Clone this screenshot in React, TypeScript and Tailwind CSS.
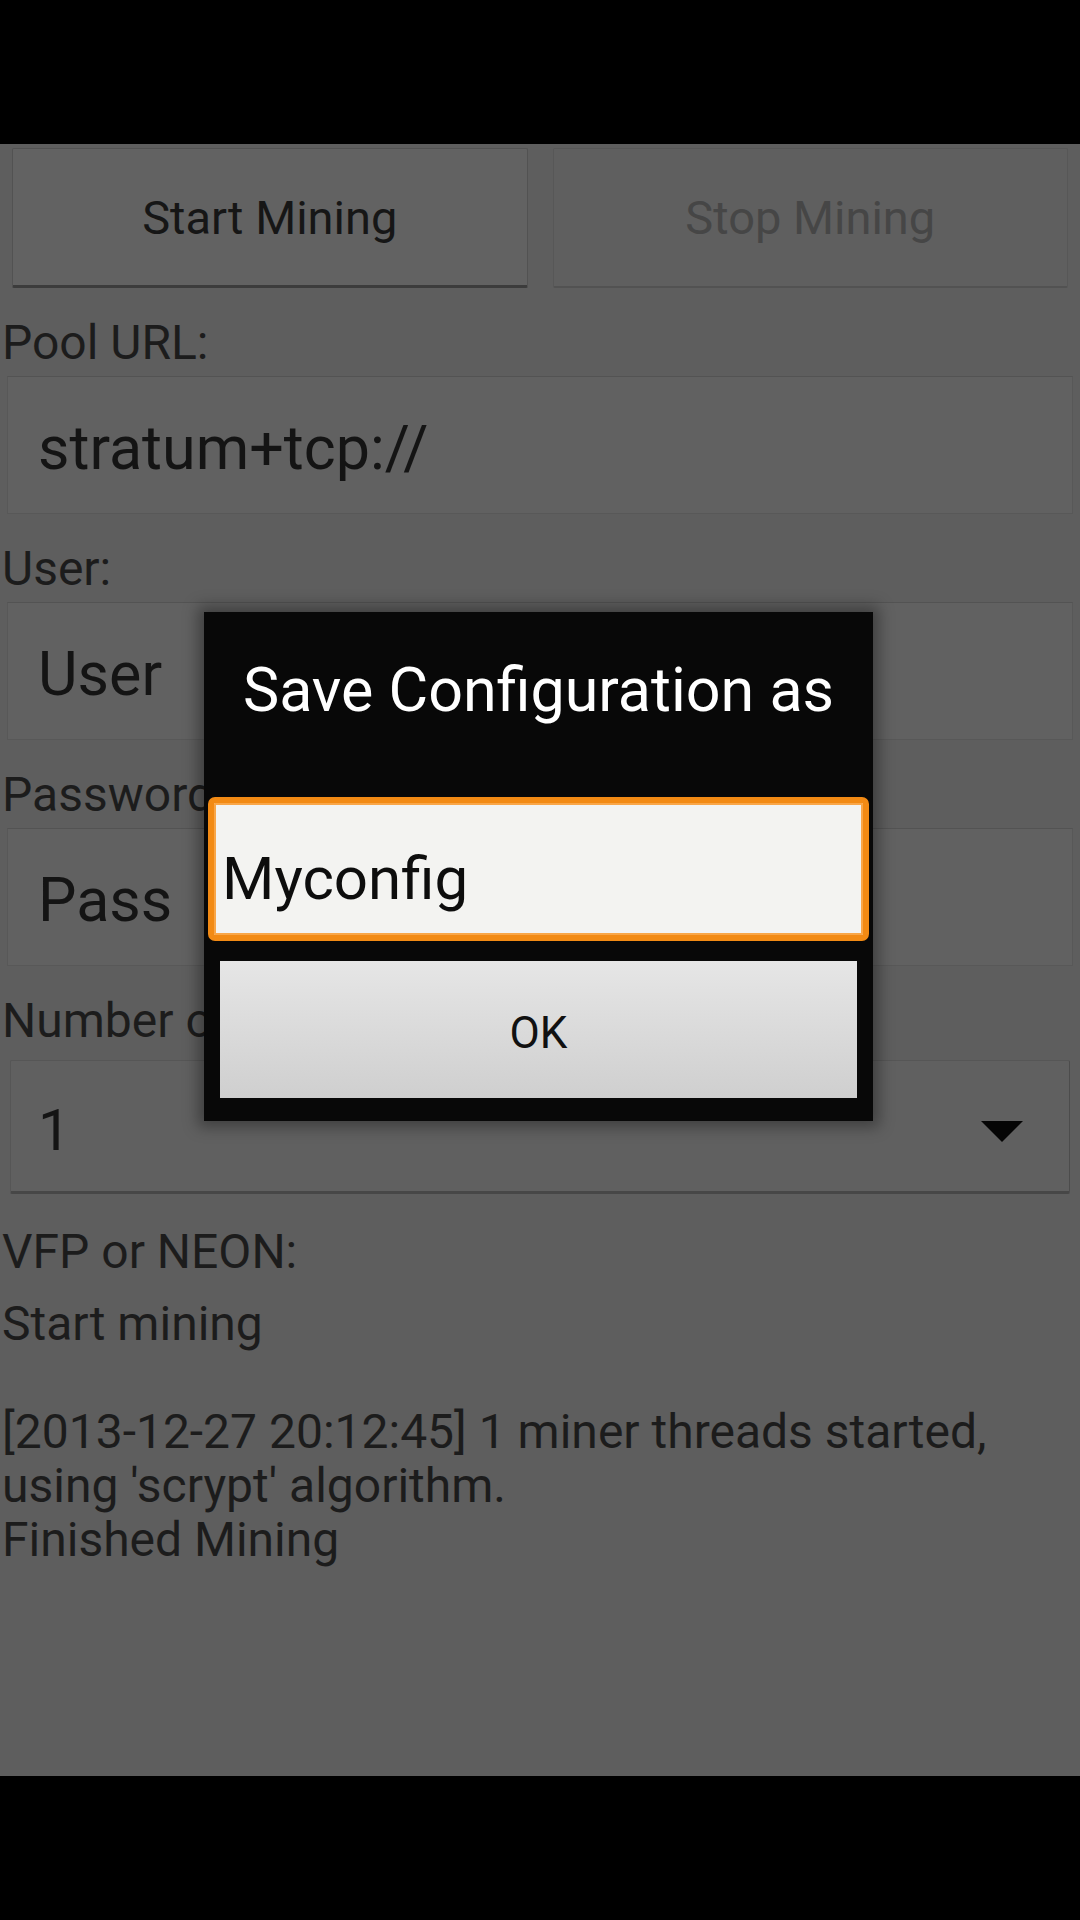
import React from "react";

const font = "font-['Roboto','Noto_Sans',sans-serif]";

function Label({ text, extra = "" }: { text: string; extra?: string }) {
  return (
    <div className={`h-[88px] pt-[27px] pl-[2px] text-[48px] leading-[56px] text-[#1c1c1c] whitespace-nowrap ${extra}`}>
      {text}
    </div>
  );
}

function Field({ value }: { value: string }) {
  return (
    <div className="mx-[7px] h-[138px] flex items-center pt-[6px] pl-[30px] bg-[#616161] border border-[#585858] border-t-[#535353] text-[61px] leading-[70px] text-[#141414]">
      {value}
    </div>
  );
}

export default function App() {
  return (
    <div className={`w-[1080px] h-[1920px] bg-black flex flex-col ${font}`}>
      <div className="h-[144px] bg-black" />
      <div className="relative h-[1632px] bg-[#5e5e5e] flex flex-col">
        {/* Buttons */}
        <div className="px-[12px] pt-[4px] grid grid-cols-2 gap-[25px]">
          <div className="h-[140px] bg-[#626262] border border-[#525252] border-b-[3px] border-b-[#3c3c3c] rounded-[2px] flex items-center justify-center pt-[2px] text-[47px] text-[#161616]">
            Start Mining
          </div>
          <div className="h-[140px] bg-[#5f5f5f] border border-[#575757] border-b-[2px] border-b-[#525252] rounded-[2px] flex items-center justify-center pt-[2px] text-[47px] text-[#464646]">
            Stop Mining
          </div>
        </div>

        <Label text="Pool URL:" />
        <Field value="stratum+tcp://" />
        <Label text="User:" />
        <Field value="User" />
        <Label text="Password:" />
        <Field value="Pass" />
        <Label text="Number of threads:" />

        {/* Spinner */}
        <div className="mx-[10px] mt-[6px] h-[134px] bg-[#606060] border border-[#565656] border-b-[3px] border-b-[#474747] border-r-[#4c4c4c] rounded-[2px] flex items-center justify-between pt-[8px] pl-[27px] pr-[46px]">
          <span className="text-[58px] leading-[68px] text-[#141414]">1</span>
          <svg width="42" height="21" viewBox="0 0 42 21" className="mt-[2px]">
            <polygon points="0,0 42,0 21,21" fill="#050505" />
          </svg>
        </div>

        <Label text="VFP or NEON:" extra="pt-[30px]" />

        <div className="mt-[15px] pl-[2px] text-[48px] leading-[54px] text-[#1c1c1c] w-[1020px]">
          <div>Start mining</div>
          <div>&nbsp;</div>
          <div>[2013-12-27 20:12:45] 1 miner threads started,</div>
          <div>using 'scrypt' algorithm.</div>
          <div>Finished Mining</div>
        </div>

        {/* Dialog */}
        <div className="absolute left-[204px] top-[468px] w-[669px] h-[509px] bg-[#080808] shadow-[0_0_14px_6px_rgba(0,0,0,0.35)] flex flex-col">
          <div className="pt-[44px] h-[113px] text-center text-[61px] leading-[68px] text-white whitespace-nowrap">
            Save Configuration as
          </div>
          <div className="mt-[72px] mx-[4px] h-[144px] rounded-[7px] border-[6px] border-[#f28a14] bg-[#f3f3f1] shadow-[inset_0_0_0_2px_#f9a648] flex items-center pt-[20px] pl-[8px] text-[60px] leading-[70px] text-[#0d0d0d]">
            Myconfig
          </div>
          <div className="mt-[20px] mx-[16px] h-[137px] bg-gradient-to-b from-[#e6e6e6] to-[#cfcfcf] flex items-center justify-center pt-[7px] text-[44px] text-[#111]">
            OK
          </div>
        </div>
      </div>
      <div className="h-[144px] bg-black" />
    </div>
  );
}
